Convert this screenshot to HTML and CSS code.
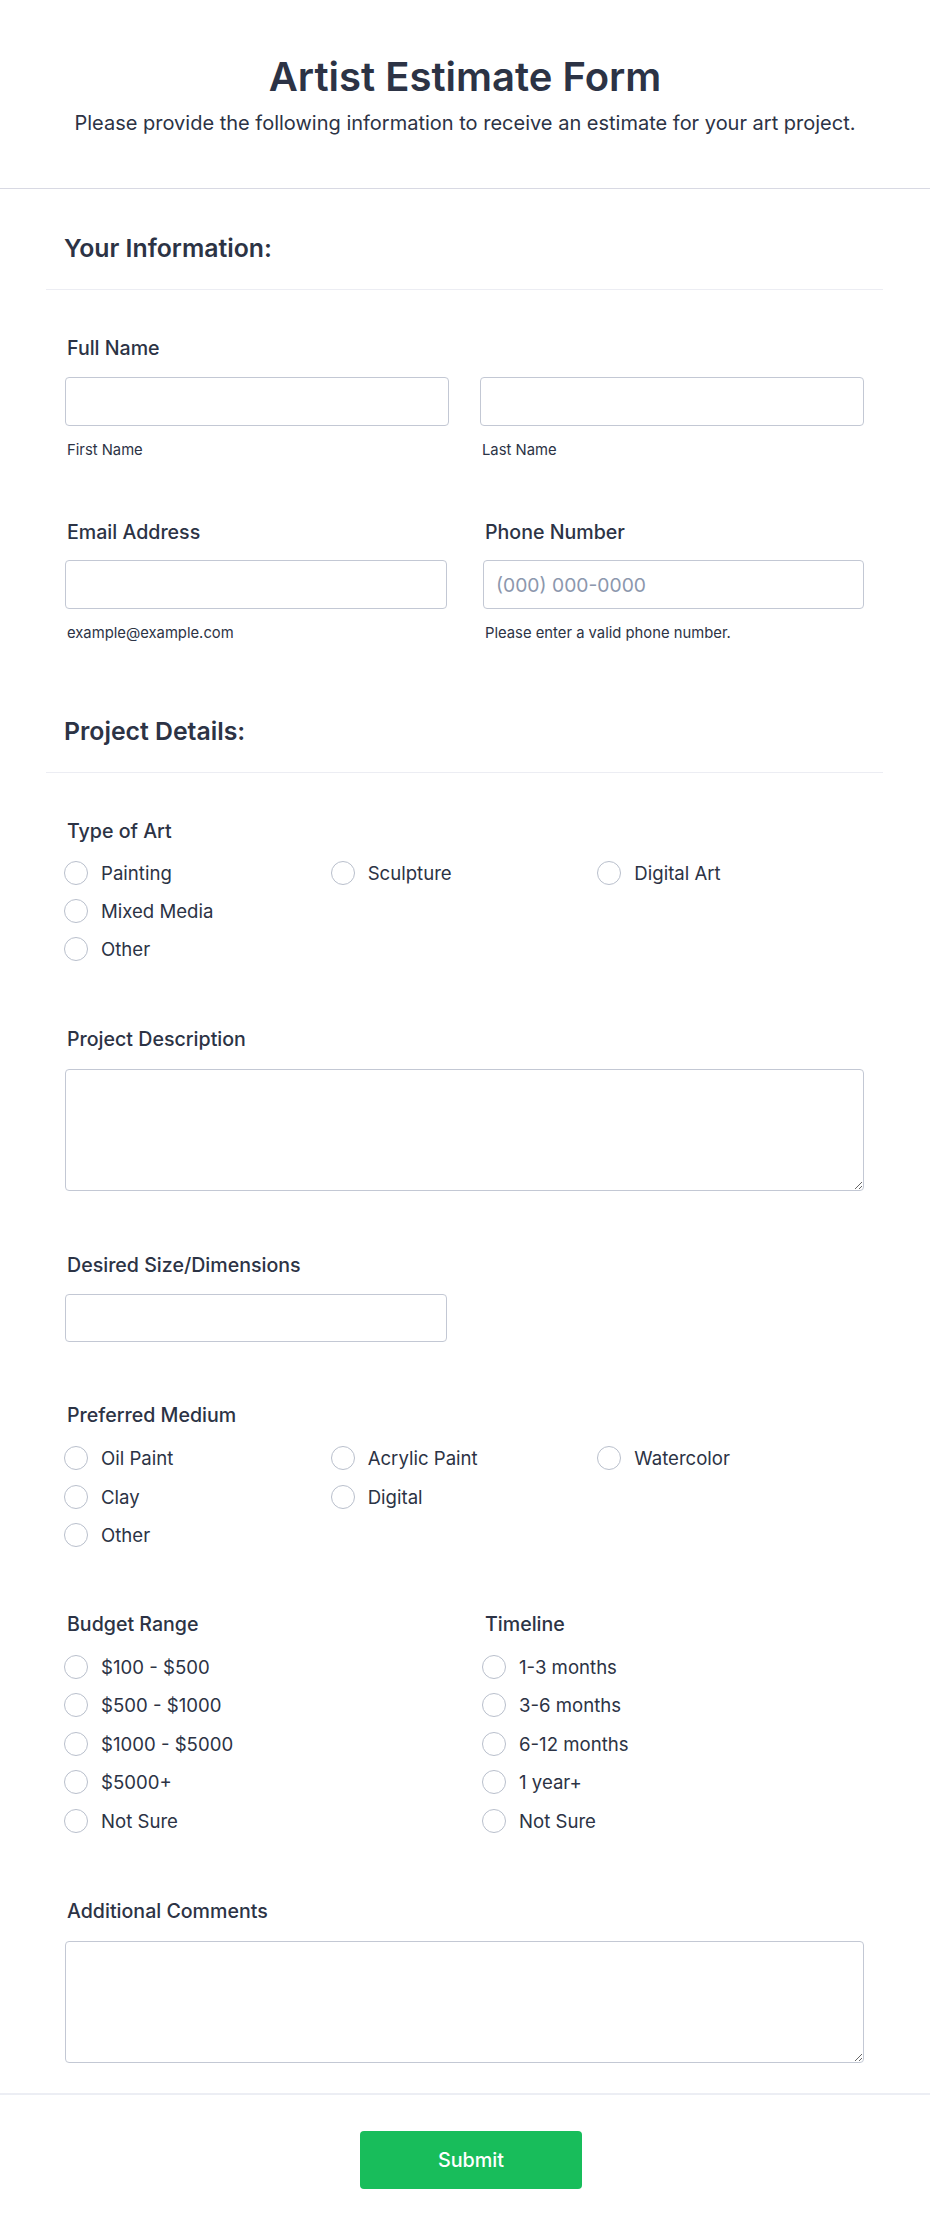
FILE: index.html
```html
<!DOCTYPE html>
<html lang="en">
<head>
<meta charset="utf-8">
<title>Artist Estimate Form</title>
<link rel="stylesheet" href="styles.css">
</head>
<body>
<header class="page-header">
  <h1 class="title">Artist Estimate Form</h1>
  <p class="subtitle">Please provide the following information to receive an estimate for your art project.</p>
</header>

<main class="form">
  <section class="section">
    <div class="section-head"><h2>Your Information:</h2></div>
    <div class="fields">
      <div class="field first">
        <label class="label">Full Name</label>
        <div class="grid-name">
          <div>
            <input class="input" type="text">
            <div class="sublabel">First Name</div>
          </div>
          <div>
            <input class="input" type="text">
            <div class="sublabel">Last Name</div>
          </div>
        </div>
      </div>
      <div class="grid-two field gap61">
        <div>
          <label class="label">Email Address</label>
          <input class="input in16" type="email">
          <div class="sublabel">example@example.com</div>
        </div>
        <div>
          <label class="label">Phone Number</label>
          <input class="input in16" type="tel" placeholder="(000) 000-0000">
          <div class="sublabel">Please enter a valid phone number.</div>
        </div>
      </div>
    </div>
  </section>

  <section class="section">
    <div class="section-head"><h2>Project Details:</h2></div>
    <div class="fields">
      <div class="field first">
        <label class="label">Type of Art</label>
        <div class="options three">
          <label class="opt"><input type="radio" name="art"><span>Painting</span></label>
          <label class="opt"><input type="radio" name="art"><span>Sculpture</span></label>
          <label class="opt"><input type="radio" name="art"><span>Digital Art</span></label>
          <label class="opt"><input type="radio" name="art"><span>Mixed Media</span></label>
          <label class="opt full"><input type="radio" name="art"><span>Other</span></label>
        </div>
      </div>

      <div class="field gap66">
        <label class="label">Project Description</label>
        <textarea class="textarea"></textarea>
      </div>

      <div class="field gap62">
        <label class="label">Desired Size/Dimensions</label>
        <input class="input half in17" type="text">
      </div>

      <div class="field gap61">
        <label class="label">Preferred Medium</label>
        <div class="options three o19">
          <label class="opt"><input type="radio" name="med"><span>Oil Paint</span></label>
          <label class="opt"><input type="radio" name="med"><span>Acrylic Paint</span></label>
          <label class="opt"><input type="radio" name="med"><span>Watercolor</span></label>
          <label class="opt"><input type="radio" name="med"><span>Clay</span></label>
          <label class="opt"><input type="radio" name="med"><span>Digital</span></label>
          <label class="opt full"><input type="radio" name="med"><span>Other</span></label>
        </div>
      </div>

      <div class="grid-two field gap65">
        <div>
          <label class="label">Budget Range</label>
          <div class="options one">
            <label class="opt"><input type="radio" name="bud"><span>$100 - $500</span></label>
            <label class="opt"><input type="radio" name="bud"><span>$500 - $1000</span></label>
            <label class="opt"><input type="radio" name="bud"><span>$1000 - $5000</span></label>
            <label class="opt"><input type="radio" name="bud"><span>$5000+</span></label>
            <label class="opt"><input type="radio" name="bud"><span>Not Sure</span></label>
          </div>
        </div>
        <div>
          <label class="label">Timeline</label>
          <div class="options one">
            <label class="opt"><input type="radio" name="time"><span>1-3 months</span></label>
            <label class="opt"><input type="radio" name="time"><span>3-6 months</span></label>
            <label class="opt"><input type="radio" name="time"><span>6-12 months</span></label>
            <label class="opt"><input type="radio" name="time"><span>1 year+</span></label>
            <label class="opt"><input type="radio" name="time"><span>Not Sure</span></label>
          </div>
        </div>
      </div>

      <div class="field gap66">
        <label class="label">Additional Comments</label>
        <textarea class="textarea"></textarea>
      </div>
    </div>
  </section>
</main>

<footer class="page-footer">
  <button class="submit" type="submit">Submit</button>
</footer>
</body>
</html>
```

FILE: styles.css
```css
* { box-sizing: border-box; }

body {
  margin: 0;
  font-family: Inter, "Noto Sans", "Liberation Sans", sans-serif;
  color: #2c3345;
  background: #ffffff;
}

.page-header {
  padding: 53px 20px 51px;
  text-align: center;
  border-bottom: 1px solid #d8d9e3;
}

.title {
  margin: 0;
  font-size: 40px;
  line-height: 48px;
  font-weight: 600;
}

.subtitle {
  margin: 8px 0 0;
  font-size: 20px;
  line-height: 28px;
  font-weight: 400;
}

.form {
  margin: 0 47px 0 46px;
}

.section-head {
  padding: 43px 19px 25px 18px;
  border-bottom: 1px solid #ecedf3;
}

.section-head h2 {
  margin: 0;
  font-size: 24.8px;
  line-height: 32px;
  font-weight: 600;
}

.fields {
  padding: 0 19px 30px;
}

.field.first { margin-top: 46px; }
.gap61 { margin-top: 61px; }
.gap62 { margin-top: 62px; }
.gap65 { margin-top: 65px; }
.gap66 { margin-top: 66px; }

.label {
  display: block;
  padding-left: 2px;
  font-size: 19.6px;
  line-height: 24px;
  font-weight: 500;
}

.input {
  display: block;
  width: 100%;
  height: 49px;
  margin-top: 17px;
  padding: 0 12px;
  border: 1px solid #c3c8d4;
  border-radius: 4px;
  font-family: inherit;
  font-size: 19.3px;
  color: #2c3345;
  background: #fff;
}
.input.in16 { margin-top: 16px; }
.input.in17 { margin-top: 17px; height: 48px; }
.input.half { width: 382px; }

.input::placeholder { color: #8c97ad; }

.sublabel {
  margin-top: 15px;
  padding-left: 2px;
  font-size: 14.8px;
  line-height: 18px;
  color: #2c3345;
}

.grid-name {
  display: grid;
  grid-template-columns: 1fr 1fr;
  column-gap: 31px;
}

.grid-two {
  display: grid;
  grid-template-columns: 382px 381px;
  column-gap: 36px;
}

.textarea {
  display: block;
  width: 100%;
  height: 122px;
  margin-top: 18px;
  border: 1px solid #c3c8d4;
  border-radius: 4px;
  font-family: inherit;
  font-size: 16px;
  resize: vertical;
}

.options {
  display: grid;
  margin-top: 18px;
  row-gap: 14px;
}
.options.three { grid-template-columns: repeat(3, 1fr); margin-left: -1px; }
.options.o19 { margin-top: 19px; row-gap: 14.5px; }
.options.one { grid-template-columns: 1fr; row-gap: 14.5px; margin-top: 18.5px; margin-left: -1px; }
.opt.full { grid-column: 1 / 2; }

.opt {
  display: flex;
  align-items: center;
  gap: 13px;
  height: 24px;
  font-size: 18.6px;
  line-height: 24px;
  color: #2c3345;
}

.opt input {
  appearance: none;
  -webkit-appearance: none;
  flex: none;
  width: 24px;
  height: 24px;
  margin: 0;
  border: 1px solid #b9bfcc;
  border-radius: 50%;
  background: #fff;
}

.page-footer {
  border-top: 2px solid #eceef4;
  padding: 36px 0 50px 12px;
  display: flex;
  justify-content: center;
}

.submit {
  width: 222px;
  height: 58px;
  border: 0;
  border-radius: 4px;
  background: #18bd5b;
  color: #ffffff;
  font-family: inherit;
  font-size: 19.8px;
  font-weight: 500;
}
```
